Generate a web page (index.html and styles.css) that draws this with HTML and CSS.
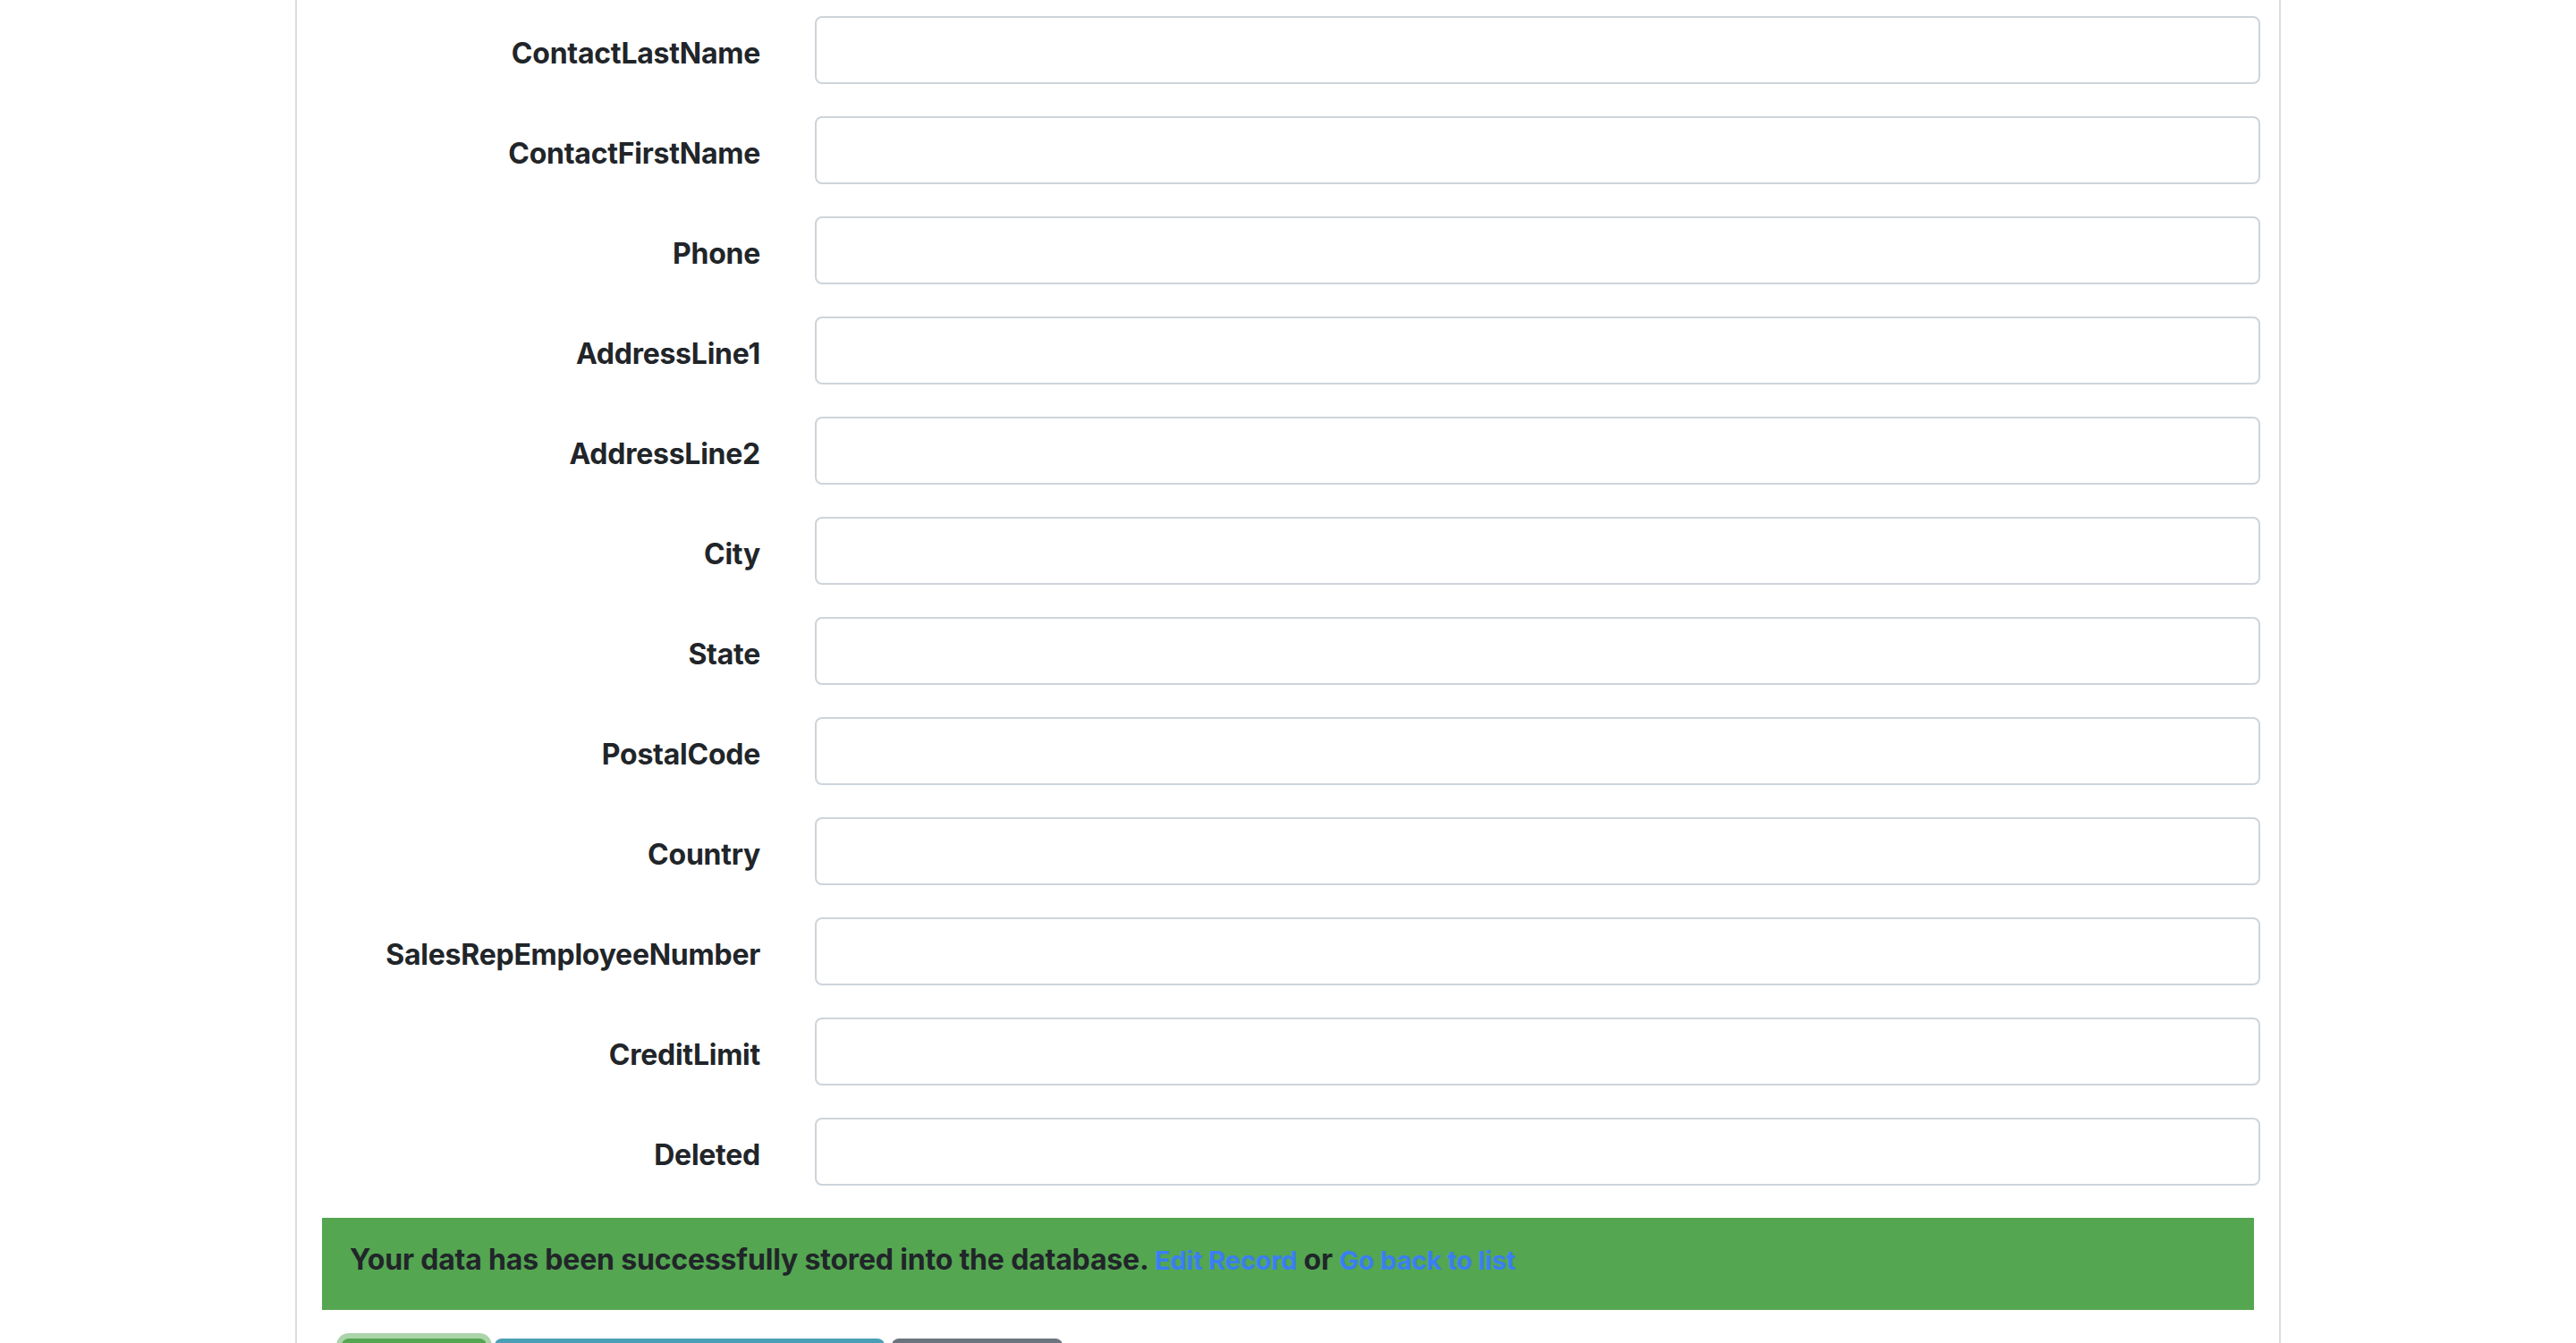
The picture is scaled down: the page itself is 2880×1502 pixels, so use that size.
FILE: index.html
```html
<!DOCTYPE html>
<html lang="en">
<head>
<meta charset="utf-8">
<title>Customer</title>
<link rel="stylesheet" href="styles.css">
</head>
<body>
<div class="card">
  <form class="form">
    <div class="row"><label class="label">ContactLastName</label><input class="input" type="text"></div>
    <div class="row"><label class="label">ContactFirstName</label><input class="input" type="text"></div>
    <div class="row"><label class="label">Phone</label><input class="input" type="text"></div>
    <div class="row"><label class="label">AddressLine1</label><input class="input" type="text"></div>
    <div class="row"><label class="label">AddressLine2</label><input class="input" type="text"></div>
    <div class="row"><label class="label">City</label><input class="input" type="text"></div>
    <div class="row"><label class="label">State</label><input class="input" type="text"></div>
    <div class="row"><label class="label">PostalCode</label><input class="input" type="text"></div>
    <div class="row"><label class="label">Country</label><input class="input" type="text"></div>
    <div class="row"><label class="label">SalesRepEmployeeNumber</label><input class="input" type="text"></div>
    <div class="row"><label class="label">CreditLimit</label><input class="input" type="text"></div>
    <div class="row"><label class="label">Deleted</label><input class="input" type="text"></div>
  </form>
  <div class="alert">Your data has been successfully stored into the database. <a class="link" href="#">Edit Record</a> or <a class="link" href="#">Go back to list</a></div>
  <div class="buttons">
    <button class="btn btn-success btn-focus" type="button">Update</button>
    <button class="btn btn-info" type="button">Update and go back to list</button>
    <button class="btn btn-secondary" type="button">Cancel</button>
  </div>
</div>
</body>
</html>
```
FILE: styles.css
```css
html, body {
  margin: 0;
  padding: 0;
  background: #ffffff;
  height: 100%;
  overflow: hidden;
}
body {
  font-family: Inter, "Liberation Sans", sans-serif;
  color: #212529;
  letter-spacing: -0.25px;
}
.card {
  width: 2220px;
  margin: 0 auto;
  box-sizing: border-box;
  border-left: 2px solid #dcdcdc;
  border-right: 2px solid #dcdcdc;
  min-height: 100%;
  padding: 18px 21px 0 28px;
}
.form {
  display: flex;
  flex-direction: column;
  gap: 36px;
  margin: 0;
}
.row {
  display: grid;
  grid-template-columns: 490px 1616px;
  column-gap: 61px;
  align-items: center;
}
.label {
  text-align: right;
  font-size: 32px;
  font-weight: 700;
  line-height: 48px;
  padding-top: 7px;
}
.input {
  box-sizing: border-box;
  height: 76px;
  width: 100%;
  border: 2px solid #ced4da;
  border-radius: 8px;
  background: #fff;
  margin: 0;
}
.alert {
  margin: 36px 7px 0 0;
  background: #54a651;
  padding: 23px 31px 31px;
  font-size: 32px;
  font-weight: 700;
  line-height: 48px;
  color: #212529;
  letter-spacing: -0.18px;
}
.link {
  color: #3a7ef4;
  text-decoration: none;
  font-size: 29px;
  letter-spacing: -0.2px;
}
.buttons {
  display: flex;
  gap: 8px;
  margin-top: 32px;
  padding-left: 22px;
}
.btn {
  height: 76px;
  border: 0;
  border-radius: 8px;
  color: #fff;
  font-family: Inter, "Liberation Sans", sans-serif;
  font-size: 32px;
  padding: 0 24px;
  white-space: nowrap;
}
.btn-success { background: #54a651; width: 162px; }
.btn-info { background: #4a9fb5; width: 436px; margin-left: 1px; }
.btn-secondary { background: #6c757d; width: 191px; }
.btn-focus { box-shadow: 0 0 0 6px #acd4aa; }
```
